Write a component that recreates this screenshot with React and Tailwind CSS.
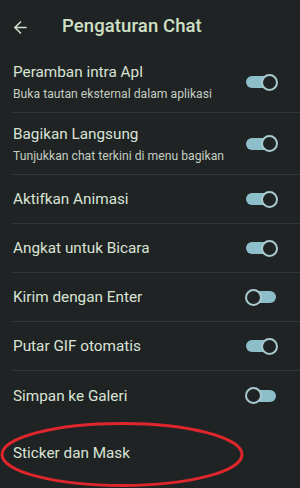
import { ArrowLeft } from 'lucide-react';

const rows = [
    { title: 'Peramban intra Apl', sub: 'Buka tautan eksternal dalam aplikasi', on: true, h: 'h-[61px]' },
    { title: 'Bagikan Langsung', sub: 'Tunjukkan chat terkini di menu bagikan', on: true, h: 'h-[62px]' },
    { title: 'Aktifkan Animasi', on: true },
    { title: 'Angkat untuk Bicara', on: true },
    { title: 'Kirim dengan Enter', on: false },
    { title: 'Putar GIF otomatis', on: true },
    { title: 'Simpan ke Galeri', on: false, last: true },
];

function Toggle({ on }) {
    return (
        <div className="relative w-[33px] h-[17px] flex items-center">
            <div className={`absolute h-[12px] rounded-full bg-[#8dbfcb] ${on ? 'left-[1px] right-[8px]' : 'left-[8px] right-[2px]'}`} />
            <div className={`absolute w-[17px] h-[17px] rounded-full border-2 border-[#a9cbd0] bg-[#1f2324] ${on ? 'right-0' : 'left-0'}`} />
        </div>
    );
}

export default function App() {
    return (
        <div className="w-[300px] h-[488px] bg-[#1f2324] overflow-hidden relative" style={{ fontFamily: 'Roboto, "Noto Sans", sans-serif' }}>
            <div className="h-[52px] flex items-center pt-[2px]">
                <ArrowLeft className="ml-[11px] w-[19px] h-[19px] text-[#d3e0cc]" strokeWidth={2} />
                <span className="ml-[32px] text-[18.5px] font-medium text-[#cfe0c6] tracking-[0.1px]">Pengaturan Chat</span>
            </div>

            {rows.map((r) => (
                <div key={r.title} className={`ml-[12px] flex items-center justify-between pr-[22px] ${r.last ? '' : 'border-b border-[#30363a]'} ${r.h || 'h-[49px]'}`}>
                    <div className="flex flex-col pl-[1px]">
                        <span className="text-[15.3px] leading-[20px] text-[#d9e3d4]">{r.title}</span>
                        {r.sub && <span className="text-[12.2px] leading-[16px] mt-[4px] text-[#c3cdc0]">{r.sub}</span>}
                    </div>
                    <Toggle on={r.on} />
                </div>
            ))}

            <div className="ml-[12px] h-[66px] flex items-center">
                <span className="pl-[1px] text-[15.3px] text-[#d9e3d4]">Sticker dan Mask</span>
            </div>

            <svg className="absolute left-0 top-[420px]" width="250" height="68" viewBox="0 0 250 68">
                <ellipse cx="122" cy="34.5" rx="120" ry="31" fill="none" stroke="#e0262d" strokeWidth="3" />
            </svg>
        </div>
    );
}
